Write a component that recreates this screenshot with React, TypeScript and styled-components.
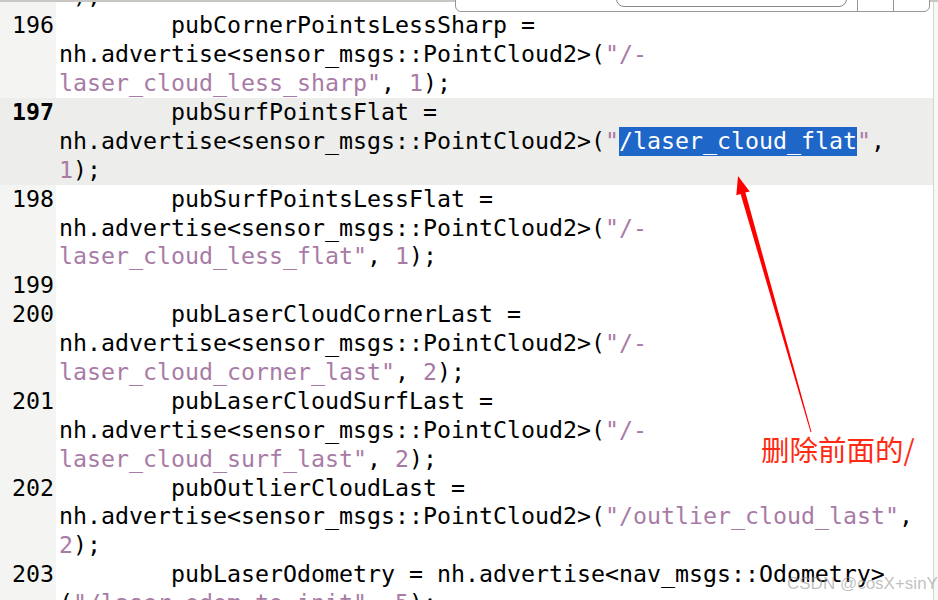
import React from "react";
import styled, { createGlobalStyle } from "styled-components";

const GlobalStyle = createGlobalStyle`
  html, body {
    margin: 0;
    padding: 0;
    background: #ffffff;
  }
`;

const Page = styled.div`
  position: relative;
  width: 938px;
  height: 600px;
  overflow: hidden;
  display: flex;
  background: #ffffff;
`;

const Editor = styled.div`
  flex: 1;
  display: flex;
  flex-direction: column;
  margin-top: -17.6px;
  font-family: "DejaVu Sans Mono", "Liberation Mono", monospace;
  font-size: 23.25px;
  color: #000000;
`;

const Scrollbar = styled.div`
  width: 4px;
  border-left: 1px solid #d4d4d2;
  background: #f8f8f7;
`;

const Line = styled.div<{ $active?: boolean }>`
  display: flex;
  background: ${(p) => (p.$active ? "#ededeb" : "transparent")};
`;

const Num = styled.div<{ $active?: boolean }>`
  width: 44px;
  flex: none;
  padding-left: 12px;
  line-height: 28.9px;
  font-weight: ${(p) => (p.$active ? 700 : 400)};
  background: ${(p) => (p.$active ? "#ededeb" : "#f4f4f2")};
`;

const Code = styled.div`
  flex: 1;
  padding-left: 3px;
`;

const Row = styled.div`
  height: 28.9px;
  line-height: 28.9px;
  white-space: pre;
`;

const Str = styled.span`
  color: #a87ba6;
`;

const Sel = styled.span`
  display: inline-block;
  background: #1f66c9;
  color: #ffffff;
`;

const TopEdge = styled.div`
  position: absolute;
  top: 0;
  left: 0;
  right: 0;
  height: 2px;
  background: #c9c7c3;
`;

const FindBar = styled.div`
  position: absolute;
  top: -30px;
  left: 455px;
  width: 473px;
  height: 40px;
  display: flex;
  align-items: flex-end;
  background: #ffffff;
  border: 1px solid #9b968f;
  border-radius: 0 0 6px 6px;
`;

const FindLabel = styled.div`
  width: 160px;
`;

const FindField = styled.div`
  width: 230px;
  height: 30px;
  margin-bottom: 4px;
  border: 1.5px solid #8e8882;
  border-radius: 8px;
`;

const FindButton = styled.div`
  width: 35px;
  height: 36px;
  margin-left: 10px;
  border-left: 1px solid #9b968f;
  & + & {
    margin-left: 0;
  }
`;

const Note = styled.div`
  position: absolute;
  left: 761px;
  top: 435px;
  font-family: "Noto Sans CJK SC", "Noto Sans", sans-serif;
  font-size: 28.5px;
  line-height: 1;
  color: #ff2a12;
  white-space: nowrap;
`;

const Watermark = styled.div`
  position: absolute;
  left: 787px;
  top: 574px;
  font-family: "Liberation Sans", Arial, sans-serif;
  font-size: 17px;
  color: rgba(150, 150, 150, 0.6);
  white-space: nowrap;
`;

const ArrowLayer = styled.svg`
  position: absolute;
  left: 0;
  top: 0;
  pointer-events: none;
`;

type Seg = ["c" | "s" | "x", string];

interface ILine {
  num: string;
  active?: boolean;
  rows: Seg[][];
}

const adv = "nh.advertise<sensor_msgs::PointCloud2>(";

const lines: ILine[] = [
  { num: "", rows: [[["c", " );"]]] },
  {
    num: "196",
    rows: [
      [["c", "        pubCornerPointsLessSharp ="]],
      [["c", adv], ["s", "\"/-"]],
      [["s", "laser_cloud_less_sharp\""], ["c", ", "], ["s", "1"], ["c", ");"]],
    ],
  },
  {
    num: "197",
    active: true,
    rows: [
      [["c", "        pubSurfPointsFlat ="]],
      [["c", adv], ["s", "\""], ["x", "/laser_cloud_flat"], ["s", "\""], ["c", ","]],
      [["s", "1"], ["c", ");"]],
    ],
  },
  {
    num: "198",
    rows: [
      [["c", "        pubSurfPointsLessFlat ="]],
      [["c", adv], ["s", "\"/-"]],
      [["s", "laser_cloud_less_flat\""], ["c", ", "], ["s", "1"], ["c", ");"]],
    ],
  },
  { num: "199", rows: [[["c", ""]]] },
  {
    num: "200",
    rows: [
      [["c", "        pubLaserCloudCornerLast ="]],
      [["c", adv], ["s", "\"/-"]],
      [["s", "laser_cloud_corner_last\""], ["c", ", "], ["s", "2"], ["c", ");"]],
    ],
  },
  {
    num: "201",
    rows: [
      [["c", "        pubLaserCloudSurfLast ="]],
      [["c", adv], ["s", "\"/-"]],
      [["s", "laser_cloud_surf_last\""], ["c", ", "], ["s", "2"], ["c", ");"]],
    ],
  },
  {
    num: "202",
    rows: [
      [["c", "        pubOutlierCloudLast ="]],
      [["c", adv], ["s", "\"/outlier_cloud_last\""], ["c", ","]],
      [["s", "2"], ["c", ");"]],
    ],
  },
  {
    num: "203",
    rows: [
      [["c", "        pubLaserOdometry = nh.advertise<nav_msgs::Odometry>"]],
      [["c", "("], ["s", "\"/laser_odom_to_init\""], ["c", ", "], ["s", "5"], ["c", ");"]],
    ],
  },
];

function Segment({ seg }: { seg: Seg }) {
  const [kind, text] = seg;
  if (kind === "s") return <Str>{text}</Str>;
  if (kind === "x") return <Sel>{text}</Sel>;
  return <>{text}</>;
}

export default function App() {
  return (
    <Page>
      <GlobalStyle />
      <Editor>
        {lines.map((line, i) => (
          <Line key={i} $active={line.active}>
            <Num $active={line.active}>{line.num}</Num>
            <Code>
              {line.rows.map((row, j) => (
                <Row key={j}>
                  {row.map((seg, k) => (
                    <Segment key={k} seg={seg} />
                  ))}
                </Row>
              ))}
            </Code>
          </Line>
        ))}
      </Editor>
      <Scrollbar />
      <TopEdge />
      <FindBar>
        <FindLabel />
        <FindField />
        <FindButton />
        <FindButton />
      </FindBar>
      <ArrowLayer width="938" height="600" viewBox="0 0 938 600">
        <polygon
          points="738,176 749.7,191.4 745.4,192.6 811.5,431.9 810.5,432.1 740.6,194 736.3,195.2"
          fill="#ff0000"
        />
      </ArrowLayer>
      <Note>删除前面的/</Note>
      <Watermark>CSDN @cosX+sinY</Watermark>
    </Page>
  );
}
